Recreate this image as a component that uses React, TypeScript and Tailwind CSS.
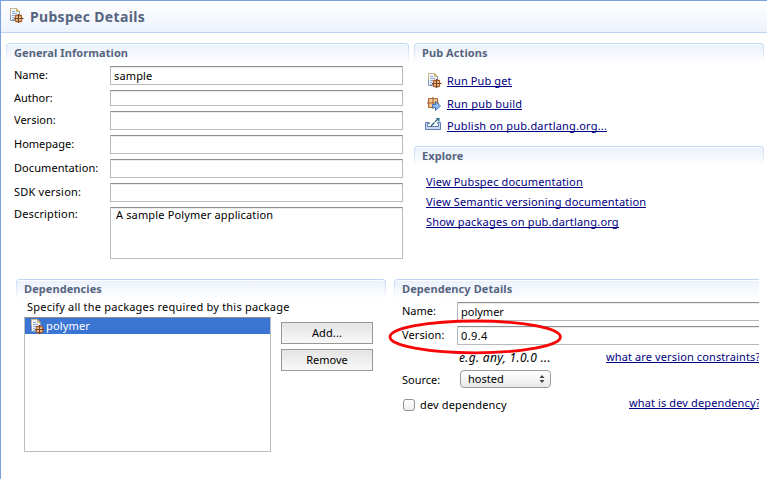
import React from "react";

function PubspecIcon({ className = "" }: { className?: string }) {
  return (
    <svg width="16" height="16" viewBox="0 0 16 16" className={`block shrink-0 ${className}`}>
      <path d="M2.5 1.5h6l3 3v9h-9z" fill="#f3f7fd" stroke="#8598b5" />
      <path d="M2.5 8V1.5h6" fill="none" stroke="#c9b98c" />
      <path d="M8.5 1.5v3h3z" fill="#e6cf8e" stroke="#c2a766" strokeWidth=".8" />
      <path d="M4 4.5h3M4 6.5h5M4 8.5h3M4 10.5h2M4 12.5h3" stroke="#8fabd6" />
      <rect x="7.5" y="8.5" width="6" height="6" rx=".5" fill="#f5d3a4" stroke="#ad5f2c" strokeWidth="1.3" />
      <path d="M10.5 7v9M6 11.5h9.5" stroke="#7c3f1c" strokeWidth="1.2" />
    </svg>
  );
}

function BuildIcon() {
  return (
    <svg width="16" height="16" viewBox="0 0 16 16" className="block shrink-0">
      <rect x="2.5" y="2.5" width="9" height="9" rx=".5" fill="#f2c592" stroke="#b06a38" strokeWidth="1.2" />
      <path d="M7 1v12M1 7h12" stroke="#a3622f" />
      <path d="M6.5 8.5h3v-3l5 4.5-5 4.5v-3h-3z" fill="#8fbdf2" stroke="#4472bb" />
    </svg>
  );
}

function PublishIcon() {
  return (
    <svg width="17" height="15" viewBox="0 0 17 15" className="block shrink-0">
      <path d="M4.5 5.5h-4v7h15v-7h-3v1h1v3h-11v-3h2z" fill="#c9daf2" stroke="#5f7eb0" />
      <path d="M6 9l6.500-6.500" stroke="#27566f" strokeWidth="1.2" strokeDasharray="5 .8" />
      <path d="M10.500 1h4v4z" fill="#287391" />
    </svg>
  );
}

function SectionTitle({ children, open = false }: { children: React.ReactNode; open?: boolean }) {
  return (
    <div className={`h-[20px] bg-linear-to-b from-[#bfd3f3] to-white pt-px pl-px ${open ? "rounded-tl-[4px]" : "rounded-t-[4px] pr-px"}`}>
      <div className={`h-[19px] border-t border-white bg-linear-to-b from-[#ebf1fc] to-white pl-[7px] font-bold leading-[16px] tracking-[0.08px] text-[#56657f] ${open ? "rounded-tl-[3px]" : "rounded-t-[3px]"}`}>
        {children}
      </div>
    </div>
  );
}

const box = "border border-[#b9b9b9] border-t-[#8f8f8f] bg-white shadow-[inset_0_1px_0_#ececec]";

function Field({ label, value, row, input = "h-[19px]", labelClass = "pt-px" }: { label: string; value?: string; row: string; input?: string; labelClass?: string }) {
  return (
    <div className={`flex ${row}`}>
      <div className={`w-[96px] shrink-0 ${labelClass}`}>{label}</div>
      <div className={`w-[293px] ${input} ${box} pt-px pl-[3px] tracking-[0.15px]`}>{value}</div>
    </div>
  );
}

function Link({ children, className = "" }: { children: React.ReactNode; className?: string }) {
  return (
    <a className={`block h-[13px] w-max border-b border-[#000080] leading-[14px] text-[#000080] ${className}`}>
      {children}
    </a>
  );
}

export default function App() {
  return (
    <div className="relative h-[479px] w-[767px] overflow-hidden border-t border-l border-[#7a9fe2] bg-white font-['Noto_Sans',sans-serif] text-[11px] leading-[16px] whitespace-nowrap text-black">
      <header className="flex h-[32px] border-b border-[#bfd3f5] bg-linear-to-b from-white to-[#edf2fc] pl-[7px]">
        <PubspecIcon className="mt-[6px]" />
        <h1 className="ml-[6px] text-[14px] leading-[31px] font-bold tracking-[0.32px] text-[#56657f]">Pubspec Details</h1>
      </header>

      <div className="flex h-[246px] pt-[10px] pl-[5px]">
        <section className="w-[403px]">
          <SectionTitle>General Information</SectionTitle>
          <div className="pt-[3px] pl-[8px]">
            <Field label="Name:" value="sample" row="h-[24px]" />
            <Field label="Author:" row="h-[21px]" input="h-[16px]" labelClass="pt-0" />
            <Field label="Version:" row="h-[24px]" />
            <Field label="Homepage:" row="h-[24px]" />
            <Field label="Documentation:" row="h-[24px]" labelClass="pt-px tracking-[0.07px]" />
            <Field label="SDK version:" row="h-[24px]" labelClass="pt-px tracking-[0.22px]" />
            <div className="flex">
              <div className="-mt-px w-[96px] shrink-0 tracking-[0.15px]">Description:</div>
              <div className={`h-[52px] w-[293px] ${box} pl-[5px] tracking-[0.15px]`}>
                <div className="-mt-px">A sample Polymer application</div>
              </div>
            </div>
          </div>
        </section>

        <div className="ml-[5px] w-[350px]">
          <section className="h-[103px]">
            <SectionTitle>Pub Actions</SectionTitle>
            <div className="flex items-start gap-[5px] pt-[9px] pl-[12px]">
              <PubspecIcon />
              <Link className="mt-[2px] tracking-[0.12px]">Run Pub get</Link>
            </div>
            <div className="flex items-start gap-[5px] pt-[8px] pl-[12px]">
              <BuildIcon />
              <Link className="mt-px tracking-[0.22px]">Run pub build</Link>
            </div>
            <div className="flex items-start gap-[5px] pt-[5px] pl-[11px]">
              <PublishIcon />
              <Link className="mt-[2px] tracking-[0.2px]">Publish on pub.dartlang.org...</Link>
            </div>
          </section>
          <section>
            <SectionTitle>Explore</SectionTitle>
            <div className="flex flex-col gap-[7px] pt-[9px] pl-[12px]">
              <Link className="tracking-[0.16px]">View Pubspec documentation</Link>
              <Link className="tracking-[0.17px]">View Semantic versioning documentation</Link>
              <Link className="tracking-[0.19px]">Show packages on pub.dartlang.org</Link>
            </div>
          </section>
        </div>
      </div>

      <div className="flex h-[200px] pl-[15px]">
        <section className="w-[370px]">
          <SectionTitle>Dependencies</SectionTitle>
          <div className="pl-[11px] tracking-[0.21px]">Specify all the packages required by this package</div>
          <div className="mt-[2px] flex pl-[8px]">
            <div className="h-[135px] w-[247px] border border-[#bdbdbd] border-t-[#8f8f8f]">
              <div className="flex h-[16px] items-center bg-[#3b75d3] pl-[4px] text-white">
                <PubspecIcon />
                <span className="ml-px tracking-[0.15px]">polymer</span>
              </div>
            </div>
            <div className="ml-[10px] flex flex-col gap-[5px] pt-[5px]">
              <button className="h-[22px] w-[92px] border border-[#989898] bg-linear-to-b from-[#e4e4e4] to-[#f8f8f8] leading-[20px] tracking-[0.1px]">Add...</button>
              <button className="h-[22px] w-[92px] border border-[#989898] bg-linear-to-b from-[#e4e4e4] to-[#f8f8f8] leading-[20px]">Remove</button>
            </div>
          </div>
        </section>

        <section className="ml-[8px] w-[365px] overflow-hidden">
          <SectionTitle open>Dependency Details</SectionTitle>
          <div className="flex h-[24px] pt-[3px] pl-[8px]">
            <div className="w-[55px] shrink-0 pt-px">Name:</div>
            <div className={`h-[19px] w-[303px] shrink-0 ${box} pt-px pl-[3px]`}>polymer</div>
          </div>
          <div className="flex h-[27px] pt-[3px] pl-[8px]">
            <div className="w-[55px] shrink-0 pt-px tracking-[0.1px]">Version:</div>
            <div className={`h-[19px] w-[303px] shrink-0 ${box} pt-px pl-[3px] tracking-[0.4px]`}>0.9.4</div>
          </div>
          <div className="flex h-[20px] pl-[65px]">
            <i className="w-[147px] shrink-0 text-[12px] tracking-[0.33px]">e.g. any, 1.0.0 ...</i>
            <Link className="shrink-0 tracking-[0.12px]">what are version constraints?</Link>
          </div>
          <div className="flex h-[18px] pl-[8px]">
            <div className="w-[58px] shrink-0 pt-[2px]">Source:</div>
            <div className="flex h-[18px] w-[91px] justify-between rounded-[4px] border border-[#9b9b9b] bg-linear-to-b from-white to-[#e9e9e9] pr-[5px] pl-[7px]">
              <span>hosted</span>
              <svg width="6" height="8" viewBox="0 0 6 8" className="mt-[4px]"><path d="M3 0l2.5 3h-5zM3 8l2.5-3h-5z" fill="#444" /></svg>
            </div>
          </div>
          <div className="flex h-[26px] pt-[8px] pl-[9px]">
            <div className="mt-[3px] h-[12px] w-[12px] shrink-0 rounded-[3px] border border-[#929292] bg-linear-to-b from-white to-[#eee]" />
            <span className="mt-px ml-[5px] w-[209px] shrink-0 tracking-[0.15px]">dev dependency</span>
            <Link className="shrink-0 tracking-[0.12px]">what is dev dependency?</Link>
          </div>
        </section>
      </div>

      <svg width="176" height="38" viewBox="0 0 176 38" className="absolute top-[317px] left-[386px]">
        <ellipse cx="88.2" cy="18.9" rx="85.2" ry="15.9" fill="none" stroke="#f60606" strokeWidth="2.8" />
      </svg>
    </div>
  );
}
